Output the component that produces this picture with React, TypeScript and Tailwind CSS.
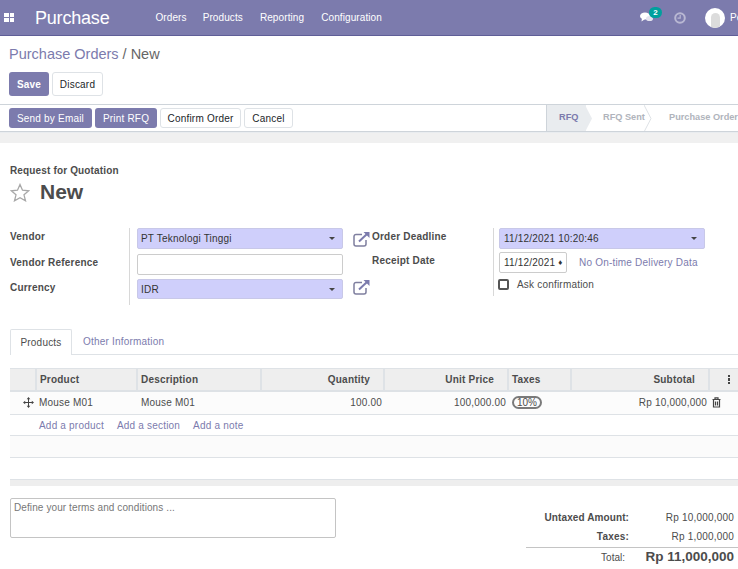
import React from "react";

const Ext = () => (
  <svg width="17" height="16" viewBox="0 0 17 16" fill="none" stroke="#7C7BAD" strokeWidth="1.5" className="shrink-0">
    <path d="M9 3.5H3a2 2 0 0 0-2 2V13a2 2 0 0 0 2 2h8a2 2 0 0 0 2-2V9" stroke="#7f7f9f" />
    <path d="M6 10.5 14 3" strokeWidth="2" />
    <path d="M10.5 1H16.5V7Z" fill="#7C7BAD" stroke="none" />
  </svg>
);

const Caret = () => (
  <span className="ml-auto mr-[7px] w-0 h-0 border-x-[3.5px] border-x-transparent border-t-[3.5px] border-t-[#444]" />
);

const Btn = ({ primary, children, w }: { primary?: boolean; children: React.ReactNode; w: string }) => (
  <div
    className={
      primary
        ? `${w} h-full flex items-center justify-center rounded-[3px] bg-[#7C7BAD] text-white`
        : `${w} h-full flex items-center justify-center rounded-[3px] bg-white border border-[#dee2e6] text-[#212529]`
    }
  >
    {children}
  </div>
);

const Th = ({ w, right, children }: { w: string; right?: boolean; children?: React.ReactNode }) => (
  <div
    className={`${w} shrink-0 h-full flex items-center border-r-2 border-[#dee2e6] pl-[3px] font-bold text-[#4c4c4c] ${right ? "justify-end pr-[13px]" : ""}`}
  >
    {children}
  </div>
);

export default function App() {
  return (
    <div
      className="w-[738px] h-[569px] overflow-hidden bg-white text-[10px] tracking-[0.2px] text-[#4c4c4c] flex flex-col"
      style={{ fontFamily: '"Liberation Sans", Arial, sans-serif' }}
    >
      {/* Nav */}
      <div className="h-[36px] shrink-0 bg-[#7C7BAD] border-b border-[#5f5e97] flex items-center text-white tracking-[0.1px] overflow-hidden">
        <div className="ml-[4px] w-[10px] h-[9px] grid grid-cols-2 gap-px">
          <span className="bg-white" />
          <span className="bg-white" />
          <span className="bg-white" />
          <span className="bg-white" />
        </div>
        <span className="ml-[21px] text-[18px] tracking-[-0.2px] leading-none">Purchase</span>
        <span className="ml-[46px]">Orders</span>
        <span className="ml-[16px]">Products</span>
        <span className="ml-[17px]">Reporting</span>
        <span className="ml-[17px]">Configuration</span>
        <div className="ml-auto flex items-center">
          <div className="relative w-[13px] h-[12px] mr-[21px]">
            <svg width="13" height="11" viewBox="0 0 13 11" fill="#fff">
              <ellipse cx="5" cy="4" rx="5" ry="3.6" />
              <path d="M2 6 1.5 9.5 5 7Z" />
              <ellipse cx="9.5" cy="6.5" rx="3.5" ry="2.6" fill="#e4e4ef" />
            </svg>
            <span className="absolute left-[9px] top-[-5px] w-[13px] h-[11px] rounded-full bg-[#00A09D] text-[8px] font-bold leading-[11px] text-center tracking-normal">
              2
            </span>
          </div>
          <svg width="12" height="12" viewBox="0 0 12 12" fill="none" stroke="#b9b8d3" strokeWidth="2" className="mr-[19px]">
            <circle cx="6" cy="6" r="4.8" />
            <path d="M6.2 3v3.2H3.5" strokeWidth="1.2" />
          </svg>
          <div className="w-[20px] h-[20px] rounded-full bg-white flex items-end justify-center overflow-hidden mr-[5px]">
            <div className="w-[9px] h-[15px] rounded-t-full bg-[#dcdcdc]" />
          </div>
          <span className="w-[8px] overflow-hidden whitespace-nowrap">Pe</span>
        </div>
      </div>

      {/* Control panel */}
      <div className="h-[69px] shrink-0 px-[9px] border-b border-[#ced4da] flex flex-col">
        <div className="h-[36px] flex items-center text-[14.5px] tracking-normal text-[#666] pt-[1px]">
          <span className="text-[#7C7BAD]">Purchase Orders</span>
          <span className="ml-[4px]">/</span>
          <span className="ml-[4px]">New</span>
        </div>
        <div className="h-[24px] flex gap-[3px]">
          <Btn primary w="w-[40px]">
            <span className="font-bold">Save</span>
          </Btn>
          <Btn w="w-[51px]">Discard</Btn>
        </div>
      </div>

      {/* Status row */}
      <div className="h-[27px] shrink-0 flex items-center pl-[9px] border-b border-[#ced4da] relative overflow-hidden">
        <div className="h-[20px] flex gap-[3px]">
          <Btn primary w="w-[83px]">
            Send by Email
          </Btn>
          <Btn primary w="w-[62px]">
            Print RFQ
          </Btn>
          <Btn w="w-[81px]">Confirm Order</Btn>
          <Btn w="w-[49px]">Cancel</Btn>
        </div>
        <div className="ml-auto h-full flex items-center font-bold text-[9.2px] tracking-normal text-[#b0b4bc] whitespace-nowrap">
          <div className="relative w-[40px] h-full bg-[#e9ecef] border-l border-[#ced4da] flex items-center pl-[12px] text-[#7C7BAD]">
            RFQ
            <svg width="8" height="27" viewBox="0 0 8 27" className="absolute left-[38px] top-0">
              <path d="M0 0 7 13.5 0 27Z" fill="#e9ecef" />
            </svg>
          </div>
          <div className="relative w-[66px] h-full flex items-center pl-[17px]">
            RFQ Sent
            <svg width="8" height="27" viewBox="0 0 8 27" fill="none" stroke="#dee2e6" className="absolute left-[58px] top-0">
              <path d="M0 0 7 13.5 0 27" />
            </svg>
          </div>
          <div className="w-[86px] pl-[17px]">Purchase Order</div>
        </div>
      </div>

      {/* Textured strip */}
      <div className="h-[11px] shrink-0 bg-[#f0f0f0] border-t border-[#e9ecef]" />

      {/* Sheet */}
      <div className="flex-1 pl-[10px] flex flex-col relative">
        <div className="mt-[20px] h-[14px] flex items-center font-bold tracking-[0.15px] text-[#4c4c4c]">Request for Quotation</div>
        <div className="h-[28px] mt-px flex items-center">
          <svg width="20" height="19" viewBox="0 0 20 19" fill="none" stroke="#a8a8a8" strokeWidth="1.3">
            <path d="M10 1.5 12.5 7.2 18.7 7.8 14 11.8 15.5 17.8 10 14.7 4.5 17.8 6 11.8 1.3 7.8 7.5 7.2Z" />
          </svg>
          <span className="ml-[10px] text-[21px] font-bold tracking-normal text-[#4c4c4c]">New</span>
        </div>

        {/* Form groups */}
        <div className="mt-[22px] flex h-[77px]">
          <div className="w-[119px] shrink-0 font-bold text-[#4c4c4c] flex flex-col pt-px">
            <div className="h-[26px]">Vendor</div>
            <div className="h-[25px]">Vendor Reference</div>
            <div>Currency</div>
          </div>
          <div className="w-[8px] shrink-0 border-l border-[#d8d8d8]" />
          <div className="w-[206px] shrink-0 flex flex-col text-[#333]">
            <div className="h-[21px] rounded-[2px] border border-[#c8c8e8] bg-[#CFCFFB] flex items-center pl-[3px]">
              PT Teknologi Tinggi
              <Caret />
            </div>
            <div className="mt-[5px] h-[21px] rounded-[2px] border border-[#ccc] bg-white" />
            <div className="mt-[4px] h-[20px] rounded-[2px] border border-[#c8c8e8] bg-[#CFCFFB] flex items-center pl-[3px]">
              IDR
              <Caret />
            </div>
          </div>
          <div className="w-[29px] shrink-0 pl-[10px] flex flex-col">
            <div className="h-[26px] pt-[3px]"><Ext /></div>
            <div className="h-[25px]" />
            <Ext />
          </div>
          <div className="w-[121px] shrink-0 font-bold text-[#4c4c4c] flex flex-col pt-px">
            <div className="h-[24px]">Order Deadline</div>
            <div>Receipt Date</div>
          </div>
          <div className="w-[6px] shrink-0 h-[68px] border-l border-[#d8d8d8]" />
          <div className="flex flex-col text-[#333]">
            <div className="w-[206px] h-[21px] rounded-[2px] border border-[#c8c8e8] bg-[#CFCFFB] flex items-center pl-[4px]">
              11/12/2021 10:20:46
              <Caret />
            </div>
            <div className="mt-[3px] h-[21px] flex items-center">
              <div className="w-[68px] h-full rounded-[2px] border border-[#ccc] flex items-center pl-[4px] whitespace-nowrap overflow-hidden">
                11/12/2021
                <span className="ml-[3px] text-[8px] tracking-normal">♦</span>
              </div>
              <span className="ml-[12px] text-[#7C7BAD]">No On-time Delivery Data</span>
            </div>
            <div className="mt-[4px] flex items-center text-[#4c4c4c]">
              <span className="w-[11px] h-[11px] rounded-[2px] border-2 border-[#555] bg-white ml-[-1px]" />
              <span className="ml-[8px]">Ask confirmation</span>
            </div>
          </div>
        </div>

        {/* Tabs */}
        <div className="mt-[24px] h-[26px] flex border-b border-[#dee2e6] shrink-0">
          <div className="w-[62px] h-[26px] bg-white border border-b-0 border-[#dee2e6] rounded-t-[2px] flex items-center justify-center text-[#4c4c4c]">
            Products
          </div>
          <div className="ml-[11px] flex items-center text-[#7C7BAD]">Other Information</div>
        </div>

        {/* Table */}
        <div className="mt-[13px] flex flex-col shrink-0">
          <div className="h-[24px] bg-[#eeeeee] border-t border-[#dee2e6] border-b-2 border-b-[#dee2e6] flex items-center">
            <Th w="w-[27px]" />
            <Th w="w-[101px]">Product</Th>
            <Th w="w-[124px]">Description</Th>
            <Th w="w-[123px]" right>Quantity</Th>
            <Th w="w-[124px]" right>Unit Price</Th>
            <Th w="w-[63px]">Taxes</Th>
            <Th w="w-[138px]" right>Subtotal</Th>
            <div className="flex-1 flex flex-col items-center gap-px pl-[10px]">
              <span className="w-[2.5px] h-[2.5px] bg-[#444]" />
              <span className="w-[2.5px] h-[2.5px] bg-[#444]" />
              <span className="w-[2.5px] h-[2.5px] bg-[#444]" />
            </div>
          </div>
          <div className="h-[23px] pb-[2px] bg-[#fcfcfc] border-b border-[#dee2e6] flex items-center">
            <div className="w-[27px] shrink-0 flex justify-end pr-[3px]">
              <svg width="11" height="11" viewBox="0 0 11 11" fill="#444">
                <path d="M5 2h1v7H5zM2 5h7v1H2z" />
                <path d="M5.5 0 7.3 2.2H3.7ZM5.5 11 3.7 8.8H7.3ZM0 5.5 2.2 3.7V7.3ZM11 5.5 8.8 7.3V3.7Z" />
              </svg>
            </div>
            <div className="w-[101px] shrink-0 pl-[2px]">Mouse M01</div>
            <div className="w-[124px] shrink-0 pl-[3px]">Mouse M01</div>
            <div className="w-[123px] shrink-0 text-right pr-[3px]">100.00</div>
            <div className="w-[124px] shrink-0 text-right pr-[3px]">100,000.00</div>
            <div className="w-[63px] shrink-0 pl-[3px]">
              <span className="inline-flex w-[30px] h-[13px] items-center justify-center rounded-full border-2 border-[#7a7a7a] tracking-normal">10%</span>
            </div>
            <div className="w-[138px] shrink-0 text-right pr-[3px]">Rp 10,000,000</div>
            <div className="pl-[2px]">
              <svg width="9" height="11" viewBox="0 0 9 11" fill="none" stroke="#444" strokeWidth="1.2">
                <path d="M1.5 3v7h6V3M.5 2.5h8M3 2V.8h3V2M3.5 4.5V8.5M5.5 4.5V8.5" />
              </svg>
            </div>
          </div>
          <div className="h-[21px] border-b border-[#dee2e6] flex items-center gap-[13px] pl-[29px] text-[#7C7BAD]">
            <span>Add a product</span>
            <span>Add a section</span>
            <span>Add a note</span>
          </div>
          <div className="h-[22px] bg-[#fbfbfb] border-b border-[#dee2e6]" />
          <div className="h-[21px]" />
          <div className="h-[7px] bg-[#eeeeee] border-t border-[#dee2e6]" />
        </div>

        {/* Footer */}
        <div className="mt-[12px] flex">
          <div className="w-[326px] h-[40px] shrink-0 rounded-[2px] border border-[#c4c4c4] px-[3px] pt-px tracking-[0.1px] text-[#777]">
            Define your terms and conditions ...
          </div>
          <div className="ml-[190px] w-[212px] shrink-0 mt-[10px] flex flex-col text-[#4c4c4c]">
            <div className="h-[18px] flex items-center pr-[4px]">
              <span className="w-[103px] text-right font-bold tracking-[0.1px]">Untaxed Amount:</span>
              <span className="ml-auto">Rp 10,000,000</span>
            </div>
            <div className="h-[20px] flex items-center pr-[4px]">
              <span className="w-[103px] text-right font-bold">Taxes:</span>
              <span className="ml-auto">Rp 1,000,000</span>
            </div>
            <div className="mt-px border-t border-[#c4c4c4] h-[20px] flex items-center pr-[4px]">
              <span className="w-[99px] text-right text-[10px] tracking-normal">Total:</span>
              <span className="ml-auto text-[13.5px] font-bold tracking-normal">Rp 11,000,000</span>
            </div>
          </div>
        </div>
      </div>
    </div>
  );
}
